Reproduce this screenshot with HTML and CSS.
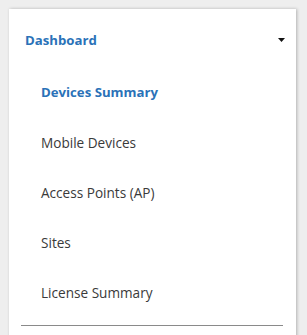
FILE: index.html
```html
<!DOCTYPE html>
<html lang="en">
<head>
    <meta charset="UTF-8">
    <meta name="viewport" content="width=device-width, initial-scale=1.0">
    <title>Dashboard Menu</title>
    <link rel="stylesheet" href="styles.css">
</head>
<body>

<div class="sidebar">
    <!-- Section header -->
    <div class="menu-header">
        <span>Dashboard</span>
        <svg class="caret" width="7" height="4" viewBox="0 0 7 4"><path d="M0 0 L7 0 L3.5 4 Z" fill="#111"/></svg>
    </div>

    <ul class="menu-list">
        <li class="menu-item active">Devices Summary</li>
        <li class="menu-item">Mobile Devices</li>
        <li class="menu-item">Access Points (AP)</li>
        <li class="menu-item">Sites</li>
        <li class="menu-item">License Summary</li>
    </ul>

    <hr class="divider">
</div>

</body>
</html>
```

FILE: styles.css
```css
body {
    margin: 0;
    background-color: #eeeeee;
    font-family: 'Open Sans', sans-serif;
    height: 335px;
    overflow: hidden;
}
.sidebar {
    margin: 9px 0 0 9px;
    width: 287px;
    height: 340px;
    padding-top: 6px;
    box-sizing: border-box;
    background-color: #ffffff;
    box-shadow: 1px 0 3px rgba(0, 0, 0, 0.25);
}
.menu-header {
    display: flex;
    align-items: center;
    justify-content: space-between;
    height: 50px;
    padding: 0 11px 0 16px;
    margin-bottom: 2px;
    color: #2a72b8;
    font-weight: bold;
    font-size: 13.2px;
}
.caret {
    display: block;
}
.menu-list {
    list-style: none;
    margin: 0;
    padding: 0;
}
.menu-item {
    display: flex;
    align-items: center;
    height: 50px;
    padding-left: 32px;
    font-size: 13.6px;
    color: #3a3a3a;
}
.menu-item.active {
    color: #2a72b8;
    font-weight: bold;
    font-size: 13.2px;
}
.divider {
    margin: 8px 13px 0 12px;
    border: none;
    border-top: 1px solid #8a8a8a;
}
```
